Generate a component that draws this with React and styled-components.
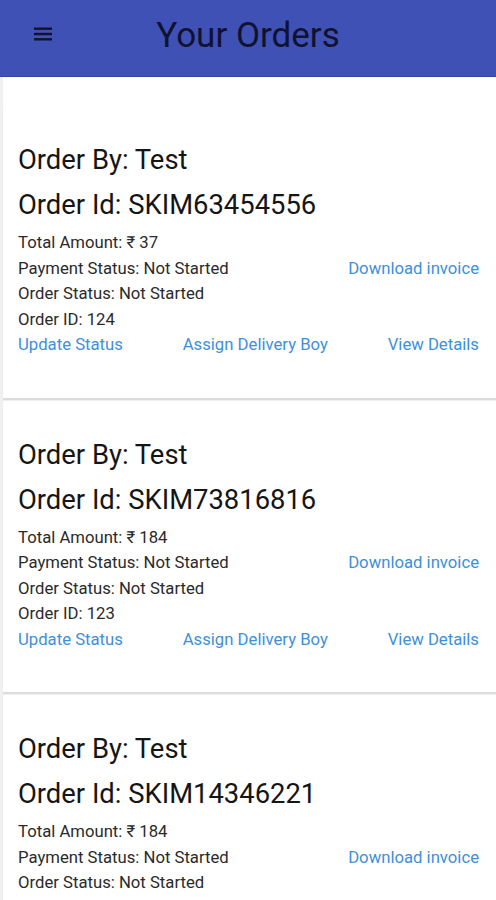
import React from "react";
import styled, { createGlobalStyle } from "styled-components";

const Global = createGlobalStyle`
  html, body { margin: 0; padding: 0; background: #fff; }
  body { font-family: Roboto, "Noto Sans", Arial, sans-serif; -webkit-font-smoothing: antialiased; }
  * { box-sizing: border-box; }
`;

const Page = styled.div`
  width: 496px;
  height: 900px;
  overflow: hidden;
  background: #fff;
`;

const Header = styled.header`
  height: 77px;
  background: #3f51b5;
  border-bottom: 1px solid #34459f;
  display: grid;
  grid-template-columns: 80px 1fr 80px;
  align-items: center;
`;

const MenuButton = styled.div`
  display: flex;
  justify-content: flex-start;
  padding-left: 34px;
  padding-bottom: 8px;
`;

const Title = styled.h1`
  margin: 0;
  text-align: center;
  font-weight: 400;
  font-size: 35px;
  line-height: 40px;
  color: #0f1230;
  padding-bottom: 5px;
`;

const List = styled.div`
  padding-top: 28px;
  border-left: 3px solid #f0f0f0;
`;

const Card = styled.section`
  padding: 33px 17px 40px 15px;
  border-bottom: 2px solid #dcdcdc;
  box-shadow: 0 1px 1px rgba(0, 0, 0, 0.06);
`;

const Heading = styled.div`
  font-size: 27.4px;
  line-height: 45px;
  color: #151515;
`;

const Details = styled.div`
  margin-top: 2px;
  display: flex;
  flex-direction: column;
`;

const Row = styled.div`
  display: flex;
  justify-content: space-between;
  align-items: center;
  height: 25.5px;
  font-size: 16.7px;
  color: #2a2a2a;
`;

const Link = styled.span`
  color: #3e8fdc;
`;

const Hamburger = () => (
  <svg width="18" height="14" viewBox="0 0 18 14">
    <rect x="0" y="0.5" width="18" height="2.4" fill="#10132e" />
    <rect x="0" y="5.8" width="18" height="2.4" fill="#10132e" />
    <rect x="0" y="11.1" width="18" height="2.4" fill="#10132e" />
  </svg>
);

const orders = [
  { code: "SKIM63454556", amount: "37", id: 124 },
  { code: "SKIM73816816", amount: "184", id: 123 },
  { code: "SKIM14346221", amount: "184", id: 122 },
];

export default function App() {
  return (
    <Page>
      <Global />
      <Header>
        <MenuButton>
          <Hamburger />
        </MenuButton>
        <Title>Your Orders</Title>
        <div />
      </Header>
      <List>
        {orders.map((o) => (
          <Card key={o.code}>
            <Heading>Order By: Test</Heading>
            <Heading>Order Id: {o.code}</Heading>
            <Details>
              <Row>
                <span>Total Amount: ₹ {o.amount}</span>
              </Row>
              <Row>
                <span>Payment Status: Not Started</span>
                <Link>Download invoice</Link>
              </Row>
              <Row>
                <span>Order Status: Not Started</span>
              </Row>
              <Row>
                <span>Order ID: {o.id}</span>
              </Row>
              <Row>
                <Link>Update Status</Link>
                <Link>Assign Delivery Boy</Link>
                <Link>View Details</Link>
              </Row>
            </Details>
          </Card>
        ))}
      </List>
    </Page>
  );
}
